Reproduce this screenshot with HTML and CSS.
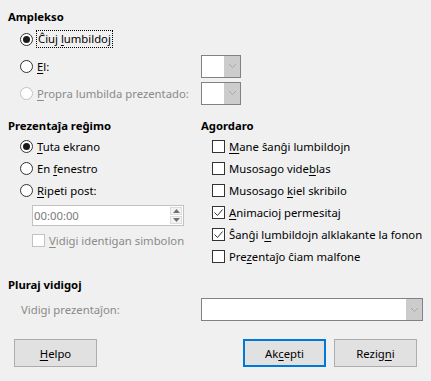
FILE: index.html
```html
<!DOCTYPE html>
<html lang="eo">
<head>
   <meta charset="UTF-8" />
   <title>Prezentaĵaj agordoj</title>
   <link rel="stylesheet" href="styles.css">
</head>
<body>
<div class="dialog">

   <section class="range">
      <h3>Amplekso</h3>
      <div class="opt-row">
         <label class="radio checked"><span class="dot"></span><span class="focus">Ĉiuj <u>l</u>umbildoj</span></label>
      </div>
      <div class="opt-row">
         <label class="radio"><span class="dot"></span><span><u>E</u>l:</span></label>
         <span class="combo"><span class="field"></span><span class="drop"><svg width="9" height="6" viewBox="0 0 9 6"><path d="M1 1 L4.5 4.5 L8 1" fill="none" stroke="#a8a8a8" stroke-width="1"/></svg></span></span>
      </div>
      <div class="opt-row">
         <label class="radio disabled"><span class="dot"></span><span><u>P</u>ropra lumbilda prezentado:</span></label>
         <span class="combo"><span class="field"></span><span class="drop"><svg width="9" height="6" viewBox="0 0 9 6"><path d="M1 1 L4.5 4.5 L8 1" fill="none" stroke="#a8a8a8" stroke-width="1"/></svg></span></span>
      </div>
   </section>

   <div class="cols">
      <section class="mode">
         <h3>Prezentaĵa reĝimo</h3>
         <label class="radio row checked"><span class="dot"></span><span><u>T</u>uta ekrano</span></label>
         <label class="radio row"><span class="dot"></span><span>En <u>f</u>enestro</span></label>
         <label class="radio row"><span class="dot"></span><span><u>R</u>ipeti post:</span></label>
         <div class="spin">
            <span class="spin-text">00:00:00</span>
            <span class="spin-btns">
               <span class="up"><svg width="7" height="4" viewBox="0 0 7 4"><path d="M0 4 L3.5 0 L7 4 Z" fill="#707070"/></svg></span>
               <span class="down"><svg width="7" height="4" viewBox="0 0 7 4"><path d="M0 0 L3.5 4 L7 0 Z" fill="#707070"/></svg></span>
            </span>
         </div>
         <label class="check row sub disabled"><span class="box"></span><span><u>V</u>idigi identigan simbolon</span></label>
      </section>

      <section class="options">
         <h3>Agordaro</h3>
         <label class="check row"><span class="box"></span><span><u>M</u>ane ŝanĝi lumbildojn</span></label>
         <label class="check row"><span class="box"></span><span>Musosago vide<u>b</u>las</span></label>
         <label class="check row"><span class="box"></span><span>Musosago <u>k</u>iel skribilo</span></label>
         <label class="check row checked"><span class="box"><svg width="11" height="11" viewBox="0 0 11 11"><path d="M1.5 5.5 L4.5 8.5 L9.5 2.5" fill="none" stroke="#333" stroke-width="1"/></svg></span><span><u>A</u>nimacioj permesitaj</span></label>
         <label class="check row checked"><span class="box"><svg width="11" height="11" viewBox="0 0 11 11"><path d="M1.5 5.5 L4.5 8.5 L9.5 2.5" fill="none" stroke="#333" stroke-width="1"/></svg></span><span>Ŝanĝi l<u>u</u>mbildojn alklakante la fonon</span></label>
         <label class="check row"><span class="box"></span><span>Pre<u>z</u>entaĵo ĉiam malfone</span></label>
      </section>
   </div>

   <section class="multi">
      <h3>Pluraj vidigoj</h3>
      <div class="multi-row">
         <span class="muted">Vidigi prezentaĵon:</span>
         <span class="combo wide"><span class="field"></span><span class="drop"><svg width="9" height="6" viewBox="0 0 9 6"><path d="M1 1 L4.5 4.5 L8 1" fill="none" stroke="#a8a8a8" stroke-width="1"/></svg></span></span>
      </div>
   </section>

   <div class="buttons">
      <button class="btn"><u>H</u>elpo</button>
      <span class="spacer"></span>
      <button class="btn default">Ak<u>c</u>epti</button>
      <button class="btn">Rezig<u>n</u>i</button>
   </div>

</div>
</body>
</html>
```

FILE: styles.css
```css
* {
   margin: 0;
   padding: 0;
   box-sizing: border-box;
}
body {
   background: #f0f0f0;
   font-family: "Noto Sans", "Open Sans", sans-serif;
   font-size: 11.3px;
   color: #000;
}
u {
   text-decoration: underline;
   text-underline-offset: 2px;
}
h3 {
   font-size: 11.3px;
   font-weight: bold;
   line-height: 16px;
   height: 16px;
}
.dialog {
   width: 431px;
   height: 381px;
   padding: 9px 8px 0;
}

/* radio and check */
.radio, .check {
   display: flex;
   align-items: center;
   gap: 4px;
   white-space: nowrap;
}
.dot {
   width: 13px;
   height: 13px;
   border: 1px solid #333;
   border-radius: 50%;
   background: #fff;
   display: flex;
   align-items: center;
   justify-content: center;
   flex: none;
}
.radio.checked .dot::after {
   content: "";
   width: 7px;
   height: 7px;
   border-radius: 50%;
   background: #1a1a1a;
}
.radio.disabled {
   color: #8a8a8a;
}
.radio.disabled .dot {
   border-color: #c2c2c2;
}
.box {
   width: 13px;
   height: 13px;
   border: 1px solid #333;
   background: #fff;
   flex: none;
   display: flex;
}
.check.disabled {
   color: #8a8a8a;
}
.check.disabled .box {
   border-color: #c2c2c2;
}
.focus {
   outline: 1px dotted #000;
   outline-offset: 0;
   padding: 0 1px;
   line-height: 16px;
}

/* combo */
.combo {
   display: flex;
   width: 40px;
   height: 23px;
   border: 1px solid #7f8388;
   background: #fff;
}
.combo .field {
   flex: 1;
}
.combo .drop {
   width: 16px;
   background: #cccccc;
   display: flex;
   align-items: center;
   justify-content: center;
}
.combo.wide {
   width: 222px;
}

/* range */
.range .opt-row {
   display: grid;
   grid-template-columns: 193px 40px;
   align-items: center;
   height: 24px;
   margin-top: 3px;
}
.range .opt-row:first-of-type {
   margin-top: 2px;
}
.range .radio {
   padding-left: 12px;
}

/* columns */
.cols {
   display: grid;
   grid-template-columns: 193px 1fr;
   margin-top: 13px;
}
.cols h3 {
   margin-bottom: 1px;
}
.row {
   height: 22px;
   padding-left: 12px;
}
.options .row {
   padding-left: 11px;
}
.spin {
   display: flex;
   margin: 4px 0 0 24px;
   width: 152px;
   height: 21px;
   border: 1px solid #c2c2c2;
   background: #fff;
}
.spin-text {
   flex: 1;
   color: #7a7a7a;
   line-height: 19px;
   padding-left: 1px;
}
.spin-btns {
   width: 14px;
   display: flex;
   flex-direction: column;
   padding: 1px;
   gap: 1px;
}
.spin-btns span {
   flex: 1;
   background: #f3f3f3;
   border: 1px solid #dcdcdc;
   display: flex;
   align-items: center;
   justify-content: center;
}
.row.sub {
   padding-left: 24px;
   margin-top: 3px;
}

/* multi */
.multi {
   margin-top: 10px;
}
.multi-row {
   display: grid;
   grid-template-columns: 193px 222px;
   align-items: center;
   margin-top: 5px;
}
.muted {
   color: #8a8a8a;
   padding-left: 13px;
}

/* buttons */
.buttons {
   display: flex;
   gap: 8px;
   padding: 0 6px;
   margin-top: 18px;
}
.spacer {
   flex: 1;
}
.btn {
   width: 83px;
   height: 28px;
   background: #e1e1e1;
   border: 1px solid #adadad;
   font-family: inherit;
   font-size: 11.3px;
   color: #000;
}
.btn.default {
   border: 2px solid #0078d7;
}
```
